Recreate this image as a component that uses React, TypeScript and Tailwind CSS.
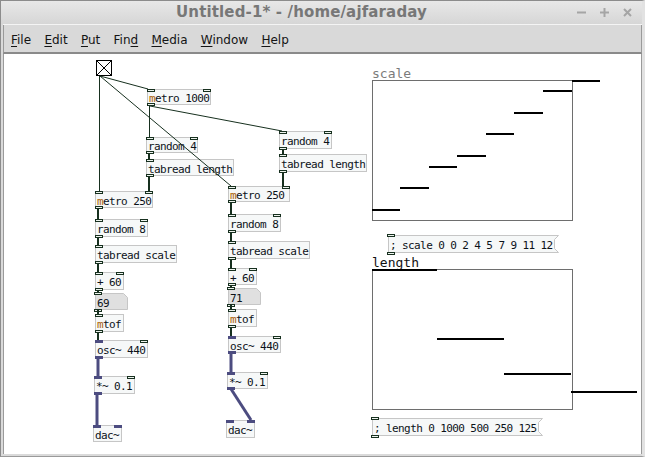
import React from "react";

const MONO = "font-['DejaVu_Sans_Mono',monospace]";
const CONTROL = "#17301f";
const SIGNAL = "#4c4c80";

// canvas starts here in the window, node data below is in window coordinates
const OX = 4;
const OY = 54;

type Port = "c" | "s";

interface NodeData {
  x: number;
  y: number;
  w: number;
  h: number;
  text: string;
  inlets?: (Port | null)[];
  outlet?: Port;
}

const nodes: NodeData[] = [
  { x: 147, y: 89, w: 64, h: 16, text: "metro 1000", inlets: ["c", "c"], outlet: "c" },
  { x: 146, y: 137, w: 52, h: 16, text: "random 4", inlets: ["c", "c"], outlet: "c" },
  { x: 146, y: 159, w: 88, h: 17, text: "tabread length", inlets: ["c"], outlet: "c" },
  { x: 279, y: 131, w: 53, h: 18, text: "random 4", inlets: ["c", "c"], outlet: "c" },
  { x: 279, y: 154, w: 88, h: 18, text: "tabread length", inlets: ["c"], outlet: "c" },
  { x: 95, y: 191, w: 58, h: 17, text: "metro 250", inlets: ["c", "c"], outlet: "c" },
  { x: 95, y: 219, w: 53, h: 18, text: "random 8", inlets: ["c", "c"], outlet: "c" },
  { x: 95, y: 245, w: 82, h: 18, text: "tabread scale", inlets: ["c"], outlet: "c" },
  { x: 95, y: 272, w: 29, h: 18, text: "+ 60", inlets: ["c", "c"], outlet: "c" },
  { x: 95, y: 314, w: 29, h: 18, text: "mtof", inlets: ["c"], outlet: "c" },
  { x: 95, y: 340, w: 53, h: 18, text: "osc~ 440", inlets: ["s", "c"], outlet: "s" },
  { x: 94, y: 376, w: 41, h: 18, text: "*~ 0.1", inlets: ["s", "c"], outlet: "s" },
  { x: 93, y: 425, w: 29, h: 17, text: "dac~", inlets: ["s", "s"] },
  { x: 228, y: 186, w: 62, h: 16, text: "metro 250", inlets: ["c", "c"], outlet: "c" },
  { x: 228, y: 214, w: 53, h: 18, text: "random 8", inlets: ["c", "c"], outlet: "c" },
  { x: 228, y: 241, w: 82, h: 18, text: "tabread scale", inlets: ["c"], outlet: "c" },
  { x: 228, y: 268, w: 29, h: 17, text: "+ 60", inlets: ["c", "c"], outlet: "c" },
  { x: 228, y: 309, w: 29, h: 18, text: "mtof", inlets: ["c"], outlet: "c" },
  { x: 228, y: 336, w: 53, h: 17, text: "osc~ 440", inlets: ["s", "c"], outlet: "s" },
  { x: 227, y: 372, w: 41, h: 17, text: "*~ 0.1", inlets: ["s", "c"], outlet: "s" },
  { x: 226, y: 420, w: 29, h: 18, text: "dac~", inlets: ["s", "s"] },
];

// [x1, y1, x2, y2, width]
const controlWires: number[][] = [
  [100, 76, 148, 89, 1],
  [100, 76, 231, 186, 1],
  [99.5, 76, 99.5, 191, 1],
  [149.5, 106, 149.5, 137, 1],
  [150, 106, 282, 131, 1],
  [149, 153, 149, 159, 2],
  [149, 176, 149, 191, 2],
  [283, 149, 283, 154, 2],
  [283, 172, 283, 186, 2],
  [98, 208, 98, 219, 2],
  [98, 237, 98, 245, 2],
  [98, 263, 98, 272, 2],
  [98, 290, 98, 293, 2],
  [98, 309, 98, 314, 2],
  [98, 332, 98, 340, 2],
  [231, 202, 231, 214, 2],
  [231, 232, 231, 241, 2],
  [231, 259, 231, 268, 2],
  [231, 285, 231, 288, 2],
  [231, 304, 231, 309, 2],
  [231, 327, 231, 336, 2],
];

const signalWires: number[][] = [
  [98, 358, 98, 376],
  [97, 394, 97, 425],
  [231, 353, 231, 372],
  [231, 389, 251, 420],
];

const menus = [
  { label: "File", key: 0 },
  { label: "Edit", key: 0 },
  { label: "Put", key: 0 },
  { label: "Find", key: 3 },
  { label: "Media", key: 0 },
  { label: "Window", key: 0 },
  { label: "Help", key: 0 },
];

const scaleBars = [
  [372, 400, 210],
  [400, 429, 188],
  [429, 457, 167],
  [457, 486, 156],
  [486, 514, 134],
  [514, 543, 113],
  [543, 572, 91],
  [572, 600, 81],
];

const lengthBars = [
  [372, 437, 270],
  [437, 504, 339],
  [504, 571, 374],
  [571, 637, 392],
];

const at = (x: number, y: number, w?: number, h?: number) => ({
  left: x - OX,
  top: y - OY,
  width: w,
  height: h,
});

const PortMark: React.FC<{ kind: Port; side: "top" | "bottom"; right?: boolean }> = ({ kind, side, right }) => (
  <div
    className={`absolute w-[8px] h-[3px] ${side === "top" ? "-top-px" : "-bottom-[2px]"} ${right ? "-right-px" : "-left-px"} ${
      kind === "s" ? "bg-[#4c4c80]" : "bg-[#eef3ee] border border-[#17301f]"
    }`}
  />
);

const Label: React.FC<{ text: string }> = ({ text }) =>
  text.startsWith("m") ? (
    <>
      <span className="text-[#a85c00]">m</span>
      {text.slice(1)}
    </>
  ) : (
    <>{text}</>
  );

const ObjectBox: React.FC<{ node: NodeData }> = ({ node }) => (
  <div
    className={`absolute bg-[#f6f8f8] border border-[#c6c6c6] ${MONO} text-[11px] tracking-[-0.6px] leading-none text-[#0c1218] flex items-center pl-px pt-[3px] whitespace-pre`}
    style={at(node.x, node.y, node.w, node.h)}
  >
    <Label text={node.text} />
    {node.inlets?.map((p, i) => p && <PortMark key={i} kind={p} side="top" right={i > 0} />)}
    {node.outlet && <PortMark kind={node.outlet} side="bottom" />}
  </div>
);

const NumberAtom: React.FC<{ x: number; y: number; value: string }> = ({ x, y, value }) => (
  <div className={`absolute ${MONO} text-[11px] tracking-[-0.6px] leading-none text-[#0c1218]`} style={at(x, y, 33, 17)}>
    <svg className="absolute inset-0" width="33" height="17">
      <polygon points="0.5,0.5 28.5,0.5 32.5,4.5 32.5,16.5 0.5,16.5" fill="#e0e0e0" stroke="#c6c6c6" />
    </svg>
    <span className="absolute left-[2px] top-[5px]">{value}</span>
    <PortMark kind="c" side="top" />
    <PortMark kind="c" side="bottom" />
  </div>
);

const MessageBox: React.FC<{ x: number; y: number; w: number; text: string }> = ({ x, y, w, text }) => (
  <div
    className={`absolute ${MONO} text-[11px] tracking-[-0.6px] leading-none text-[#0c1218] whitespace-pre`}
    style={at(x, y, w, 18)}
  >
    <svg className="absolute inset-0" width={w} height="18">
      <polygon
        points={`0.5,0.5 ${w - 0.5},0.5 ${w - 4.5},4.5 ${w - 4.5},13.5 ${w - 0.5},17.5 0.5,17.5`}
        fill="#f6f8f8"
        stroke="#c6c6c6"
      />
    </svg>
    <span className="absolute left-[2px] top-[5px]">{text}</span>
    <PortMark kind="c" side="top" />
    <PortMark kind="c" side="bottom" />
  </div>
);

const Graph: React.FC<{ title: string; dark?: boolean; x: number; y: number; h: number; bars: number[][] }> = ({
  title,
  dark,
  x,
  y,
  h,
  bars,
}) => (
  <>
    <div
      className={`absolute ${MONO} text-[13px] leading-none ${dark ? "text-[#111111]" : "text-[#7b7b7b]"}`}
      style={at(x, y - 13)}
    >
      {title}
    </div>
    <div className="absolute border border-[#6e6e6e]" style={at(x, y, 201, h)} />
    {bars.map(([x1, x2, by]) => (
      <div key={x1} className="absolute h-[2px] bg-black" style={at(x1, by - 1, x2 - x1)} />
    ))}
  </>
);

const App: React.FC = () => {
  return (
    <div className="w-[645px] h-[457px] flex flex-col bg-[#dadada] border-t border-l border-[#8c8c8c] border-r-[3px] border-r-[#e2e2e2] border-b border-b-[#9a9a9a] font-['DejaVu_Sans',sans-serif] overflow-hidden">
      {/* title bar */}
      <div className="h-[23px] shrink-0 flex items-center bg-gradient-to-b from-[#e8e8e8] to-[#d6d6d6]">
        <div className="flex-1 text-center text-[15px] tracking-[0.14px] font-bold text-[#777777] leading-none pl-[25px]">
          Untitled-1* - /home/ajfaraday
        </div>
        <div className="flex gap-[14px] items-center mr-[10px]">
          <svg width="9" height="9" viewBox="0 0 9 9">
            <path d="M0 4.5H9" stroke="#a5a5a5" strokeWidth="2" />
          </svg>
          <svg width="9" height="9" viewBox="0 0 9 9">
            <path d="M0 4.5H9M4.5 0V9" stroke="#a5a5a5" strokeWidth="2" />
          </svg>
          <svg width="9" height="9" viewBox="0 0 9 9">
            <path d="M1 1L8 8M8 1L1 8" stroke="#a5a5a5" strokeWidth="2" />
          </svg>
        </div>
      </div>

      {/* menu bar + canvas */}
      <div className="flex-1 flex flex-col border-t border-t-[#f4f4f4] ml-[2px] pb-[2px] min-h-0">
        <div className="h-[29px] shrink-0 flex items-center gap-[13.3px] pl-[7px] pt-[2px] bg-[#d9d9d9] border-l border-r border-[#9a9a9a] border-b-2 border-b-[#8a8a8a] text-[12px] leading-none text-[#141414]">
          {menus.map((m) => (
            <span key={m.label}>
              {m.label.slice(0, m.key)}
              <span className="underline underline-offset-2">{m.label[m.key]}</span>
              {m.label.slice(m.key + 1)}
            </span>
          ))}
        </div>

        <div className="flex-1 relative bg-white border-l border-r border-[#9a9a9a]">
          {/* bang */}
          <div className="absolute w-[16px] h-[16px] border border-black" style={at(96, 60)}>
            <svg width="14" height="14" className="block">
              <path d="M0 0L14 14M14 0L0 14" stroke="#000" strokeWidth="1" />
            </svg>
          </div>

          {nodes.map((n) => (
            <ObjectBox key={`${n.x}-${n.y}`} node={n} />
          ))}

          <NumberAtom x={95} y={293} value="69" />
          <NumberAtom x={228} y={288} value="71" />

          <MessageBox x={388} y={235} w={171} text="; scale 0 0 2 4 5 7 9 11 12" />
          <MessageBox x={372} y={418} w={171} text="; length 0 1000 500 250 125" />

          <Graph title="scale" x={372} y={80} h={141} bars={scaleBars} />
          <Graph title="length" dark x={372} y={269} h={141} bars={lengthBars} />

          {/* patch cords */}
          <svg className="absolute inset-0 pointer-events-none" width="641" height="403">
            {controlWires.map(([x1, y1, x2, y2, sw], i) => (
              <line key={i} x1={x1 - OX} y1={y1 - OY} x2={x2 - OX} y2={y2 - OY} stroke={CONTROL} strokeWidth={sw} />
            ))}
            {signalWires.map(([x1, y1, x2, y2], i) => (
              <line key={i} x1={x1 - OX} y1={y1 - OY} x2={x2 - OX} y2={y2 - OY} stroke={SIGNAL} strokeWidth={3} />
            ))}
          </svg>
        </div>
      </div>
    </div>
  );
};

export default App;
